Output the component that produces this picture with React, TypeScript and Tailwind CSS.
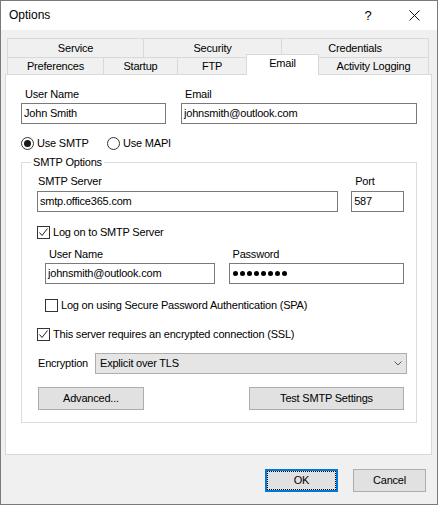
import React from "react";

const inputCls =
  "h-[21px] border border-[#7a7a7a] bg-white flex items-center pl-[2px] overflow-hidden whitespace-nowrap";
const btnCls =
  "h-[23px] border border-[#adadad] bg-[#e1e1e1] flex items-center justify-center";

function Check({ checked }: { checked: boolean }) {
  return (
    <span className="w-[13px] h-[13px] border border-[#333333] bg-white flex items-center justify-center shrink-0">
      {checked && (
        <svg width="11" height="11" viewBox="0 0 11 11">
          <path d="M1.5 5.5 L4 8.5 L9.5 1.5" fill="none" stroke="#222" strokeWidth="1" />
        </svg>
      )}
    </span>
  );
}

function Radio({ on }: { on: boolean }) {
  return (
    <span className="w-[13px] h-[13px] rounded-full border border-[#333333] bg-white flex items-center justify-center shrink-0">
      {on && <span className="w-[7px] h-[7px] rounded-full bg-[#1a1a1a]" />}
    </span>
  );
}

function Tab({ label, w, last }: { label: string; w: string; last?: boolean }) {
  return (
    <div
      className={
        "h-full flex items-center justify-center border-t border-l border-[#d9d9d9] " +
        w +
        (last ? " border-r" : "")
      }
    >
      {label}
    </div>
  );
}

export default function App() {
  return (
    <div className="w-[439px] h-[506px] bg-white font-['Liberation_Sans',Arial,sans-serif] text-[11px] tracking-[-0.2px] text-black leading-[15px]">
      <div className="w-[438px] h-[505px] border border-[#7a7a7a] flex flex-col">
        {/* title bar */}
        <div className="h-[29px] bg-white flex items-center shrink-0">
          <span className="flex-1 pl-[8px] text-[12px] tracking-normal">Options</span>
          <span className="w-[46px] h-full flex items-center justify-center text-[13px]">?</span>
          <span className="w-[46px] h-full flex items-center justify-center">
            <svg width="11" height="11" viewBox="0 0 11 11">
              <path d="M0.5 0.5 L10.5 10.5 M10.5 0.5 L0.5 10.5" stroke="#111" strokeWidth="1" />
            </svg>
          </span>
        </div>

        {/* body */}
        <div className="flex-1 bg-[#f0f0f0] pt-[8px] pl-[4px] flex flex-col">
          <div className="pl-[2px]">
            <div className="flex h-[19px] w-[422px]">
              <Tab label="Service" w="w-[136px]" />
              <Tab label="Security" w="w-[138px]" />
              <Tab label="Credentials" w="w-[148px]" last />
            </div>
            <div className="flex h-[17px] w-[422px] items-end">
              <Tab label="Preferences" w="w-[96px]" />
              <Tab label="Startup" w="w-[74px]" />
              <Tab label="FTP" w="w-[69px]" />
              <div className="w-[73px] h-[21px] -mb-[1px] relative z-10 bg-white border-t border-l border-r border-[#d9d9d9] flex items-center justify-center pb-[3px]">
                Email
              </div>
              <Tab label="Activity Logging" w="w-[110px] border-l-0" last />
            </div>
          </div>

          {/* panel */}
          <div className="w-[427px] h-[381px] bg-white border border-[#d9d9d9] pt-[12px] pl-[15px]">
            <div className="flex gap-[15px]">
              <div className="w-[145px]">
                <div className="h-[15px] pl-[4px]">User Name</div>
                <div className={inputCls + " mt-[1px]"}>John Smith</div>
              </div>
              <div className="w-[236px]">
                <div className="h-[15px] pl-[4px]">Email</div>
                <div className={inputCls + " mt-[1px]"}>johnsmith@outlook.com</div>
              </div>
            </div>

            <div className="flex h-[15px] mt-[12px] items-center">
              <div className="w-[86px] flex items-center gap-[3px]">
                <Radio on />
                <span>Use SMTP</span>
              </div>
              <div className="flex items-center gap-[3px]">
                <Radio on={false} />
                <span>Use MAPI</span>
              </div>
            </div>

            {/* SMTP options group */}
            <div className="relative w-[396px] h-[261px] mt-[11px] border border-[#dcdcdc] pl-[15px] pr-[12px] pt-[11px]">
              <span className="absolute -top-[8px] left-[9px] bg-white px-[2px]">SMTP Options</span>

              <div className="flex gap-[13px]">
                <div className="w-[302px]">
                  <div className="h-[15px] pl-[1px]">SMTP Server</div>
                  <div className={inputCls + " mt-[2px]"}>smtp.office365.com</div>
                </div>
                <div className="w-[53px]">
                  <div className="h-[15px] pl-[4px]">Port</div>
                  <div className={inputCls + " mt-[2px]"}>587</div>
                </div>
              </div>

              <div className="flex h-[15px] mt-[13px] items-center gap-[3px]">
                <Check checked />
                <span>Log on to SMTP Server</span>
              </div>

              <div className="flex gap-[14px] ml-[8px] mt-[7px]">
                <div className="w-[170px]">
                  <div className="h-[15px] pl-[4px]">User Name</div>
                  <div className={inputCls + " mt-[1px]"}>johnsmith@outlook.com</div>
                </div>
                <div className="w-[176px]">
                  <div className="h-[15px] pl-[4px]">Password</div>
                  <div className={inputCls + " mt-[1px] gap-[2px] pl-[3px]"}>
                    {Array.from({ length: 8 }).map((_, i) => (
                      <span key={i} className="w-[5px] h-[5px] rounded-full bg-black" />
                    ))}
                  </div>
                </div>
              </div>

              <div className="flex h-[15px] mt-[14px] ml-[8px] items-center gap-[3px]">
                <Check checked={false} />
                <span>Log on using Secure Password Authentication (SPA)</span>
              </div>

              <div className="flex h-[15px] mt-[14px] items-center gap-[3px]">
                <Check checked />
                <span>This server requires an encrypted connection (SSL)</span>
              </div>

              <div className="flex mt-[11px] items-center">
                <span className="w-[58px] pl-[1px] shrink-0">Encryption</span>
                <div className="w-[312px] h-[21px] border border-[#adadad] bg-[#e5e5e5] flex items-center pl-[4px] pr-[4px] shrink-0">
                  <span className="flex-1">Explicit over TLS</span>
                  <svg width="8" height="5" viewBox="0 0 8 5">
                    <path d="M0.5 0.5 L4 4 L7.5 0.5" fill="none" stroke="#555" strokeWidth="1" />
                  </svg>
                </div>
              </div>

              <div className="flex mt-[13px] justify-between">
                <div className={btnCls + " w-[106px] ml-[1px]"}>Advanced...</div>
                <div className={btnCls + " w-[155px]"}>Test SMTP Settings</div>
              </div>
            </div>
          </div>

          {/* dialog buttons */}
          <div className="flex justify-end gap-[15px] pr-[11px] mt-[14px]">
            <div className="w-[73px] h-[23px] border-2 border-[#0078d7] bg-[#e1e1e1]">
              <div className="h-full border border-dotted border-[#000] flex items-center justify-center">OK</div>
            </div>
            <div className={btnCls + " w-[73px]"}>Cancel</div>
          </div>
        </div>
      </div>
    </div>
  );
}
